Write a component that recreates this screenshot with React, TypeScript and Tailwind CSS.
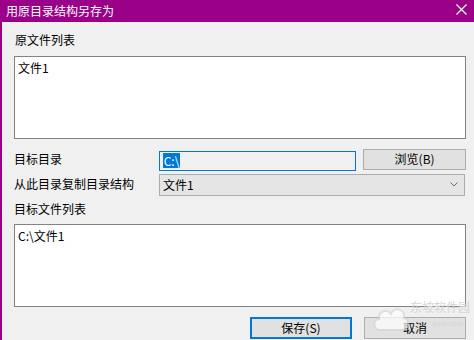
export default function App() {
  const font = { fontFamily: '"Noto Sans CJK SC", "Microsoft YaHei", sans-serif' };

  return (
    <div
      className="relative w-[474px] h-[340px] overflow-hidden bg-[#f0f0f0] text-[12px] leading-[16px] text-black flex flex-col"
      style={font}
    >
      {/* Title bar */}
      <div className="h-[22px] bg-[#9a0088] flex items-center justify-between pl-[6px] pr-[7px] shrink-0">
        <span className="text-white text-[12px]">用原目录结构另存为</span>
        <svg width="11" height="11" viewBox="0 0 11 11" className="mt-[-4px]">
          <path d="M0.5 0.5 L10.5 10.5 M10.5 0.5 L0.5 10.5" stroke="#ffffff" strokeWidth="1.2" />
        </svg>
      </div>

      {/* Body */}
      <div className="flex-1 flex flex-col border-l-2 border-[#9a0088] pl-[12px] pr-[8px] pt-[10px]">
        <div className="h-[16px] pl-px">原文件列表</div>
        <div className="mt-[8px] h-[83px] bg-white border border-[#828282] px-[3px] pt-[3px]">文件1</div>

        <div className="mt-[9px] flex items-center h-[22px]">
          <div className="w-[145px]">目标目录</div>
          <div className="w-[198px] h-[20px] mt-[3px] bg-[#f0f0f0] border border-[#0078d7] flex items-center px-[3px]">
            <span className="bg-[#0078d7] text-white leading-[15px] px-px">C:\</span>
          </div>
          <div className="ml-[7px] w-[103px] h-[21px] bg-[#e1e1e1] border border-[#adadad] flex items-center justify-center">
            浏览(B)
          </div>
        </div>

        <div className="mt-[3px] flex items-center h-[23px]">
          <div className="w-[145px] mb-[2px]">从此目录复制目录结构</div>
          <div className="w-[306px] h-[22px] bg-[#e5e5e5] border border-[#acacac] flex items-center justify-between pl-[3px] pr-[6px]">
            <span>文件1</span>
            <svg width="8" height="5" viewBox="0 0 8 5">
              <path d="M0.5 0.5 L4 4 L7.5 0.5" fill="none" stroke="#707070" strokeWidth="1" />
            </svg>
          </div>
        </div>

        <div className="mt-[5px] h-[16px]">目标文件列表</div>
        <div className="mt-[7px] h-[83px] bg-white border border-[#828282] px-[3px] pt-[3px]">C:\文件1</div>

        <div className="mt-[10px] flex justify-end gap-[12px]">
          <div className="w-[102px] h-[22px] bg-[#e1e1e1] border-2 border-[#0078d7] flex items-center justify-center">
            保存(S)
          </div>
          <div className="w-[102px] h-[22px] bg-[#e1e1e1] border border-[#adadad] flex items-center justify-center">
            取消
          </div>
        </div>
      </div>

      {/* Watermark */}
      <svg
        width="40"
        height="34"
        viewBox="0 0 40 34"
        className="absolute left-[370px] top-[300px] opacity-70 pointer-events-none"
      >
        <path
          d="M10 30 C3 30 2 20 9 19 C8 11 18 8 21 14 C24 6 36 9 34 18 C40 19 39 30 32 30 Z"
          fill="#ffffff"
          stroke="#d8d8d8"
          strokeWidth="2"
        />
      </svg>
      <span className="absolute left-[410px] top-[300px] text-[12px] leading-[14px] text-[#d6d6d6] pointer-events-none">
        东坡软件园
      </span>
      <span className="absolute left-[432px] top-[319px] text-[7px] leading-[8px] text-[#d6d6d6] pointer-events-none">
        qqtn.com
      </span>
    </div>
  );
}
